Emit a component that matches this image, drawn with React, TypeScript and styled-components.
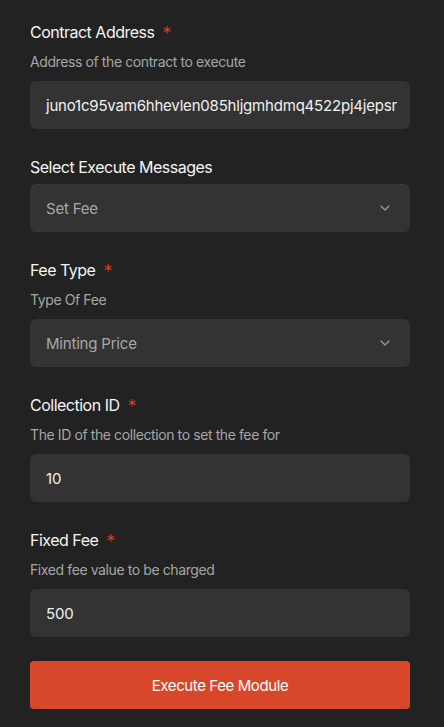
import React from "react";
import styled, { createGlobalStyle } from "styled-components";

const Global = createGlobalStyle`
  html, body { margin: 0; padding: 0; background: #222222; }
  body { font-family: Inter, "Noto Sans", sans-serif; -webkit-font-smoothing: antialiased; }
  * { box-sizing: border-box; }
`;

const Page = styled.div`
  display: flex;
  flex-direction: column;
  padding: 22px 34px 19px 30px;
  background: #222222;
  min-height: 727px;
`;

const Field = styled.div`
  display: flex;
  flex-direction: column;
  margin-bottom: 28px;
`;

const Label = styled.div`
  display: flex;
  align-items: center;
  gap: 8px;
  height: 20px;
  font-size: 16px;
  font-weight: 400;
  letter-spacing: -0.5px;
  color: #f4f4f4;
`;

const Star = styled.span`
  color: #d9472a;
  font-size: 18px;
  font-weight: 300;
  line-height: 20px;
  position: relative;
  top: 2px;
`;

const Desc = styled.div`
  margin-top: 10px;
  height: 20px;
  line-height: 20px;
  font-size: 14px;
  letter-spacing: -0.4px;
  color: #a6a6a6;
`;

const Box = styled.div<{ $tight?: boolean }>`
  margin-top: ${(p) => (p.$tight ? 7 : 9)}px;
  height: 48px;
  border-radius: 6px;
  background: #333333;
  display: flex;
  align-items: center;
  justify-content: space-between;
  padding: 0 20px 0 16px;
`;

const Value = styled.span<{ $muted?: boolean }>`
  font-size: 15px;
  letter-spacing: -0.2px;
  color: ${(p) => (p.$muted ? "#a8a8a8" : "#f0f0f0")};
  white-space: nowrap;
`;

const Chevron = () => (
  <svg width="10" height="6" viewBox="0 0 10 6" fill="none">
    <path d="M1 1l4 4 4-4" stroke="#9a9a9a" strokeWidth="1.2" strokeLinecap="round" strokeLinejoin="round" />
  </svg>
);

const Button = styled.button`
  margin-top: -4px;
  height: 48px;
  border: none;
  border-radius: 4px;
  background: #d9472a;
  color: #ffffff;
  font-family: Inter, "Noto Sans", sans-serif;
  font-size: 15px;
  font-weight: 400;
  letter-spacing: -0.4px;
  cursor: pointer;
`;

type F = { label: string; required?: boolean; desc?: string; value: string; select?: boolean };

const fields: F[] = [
  { label: "Contract Address", required: true, desc: "Address of the contract to execute", value: "juno1c95vam6hhevlen085hljgmhdmq4522pj4jepsr" },
  { label: "Select Execute Messages", value: "Set Fee", select: true },
  { label: "Fee Type", required: true, desc: "Type Of Fee", value: "Minting Price", select: true },
  { label: "Collection ID", required: true, desc: "The ID of the collection to set the fee for", value: "10" },
  { label: "Fixed Fee", required: true, desc: "Fixed fee value to be charged", value: "500" },
];

export default function App() {
  return (
    <>
      <Global />
      <Page>
        {fields.map((f) => (
          <Field key={f.label}>
            <Label>
              {f.label}
              {f.required && <Star>*</Star>}
            </Label>
            {f.desc && <Desc>{f.desc}</Desc>}
            <Box $tight={!f.desc}>
              <Value $muted={f.select}>{f.value}</Value>
              {f.select && <Chevron />}
            </Box>
          </Field>
        ))}
        <Button>Execute Fee Module</Button>
      </Page>
    </>
  );
}
